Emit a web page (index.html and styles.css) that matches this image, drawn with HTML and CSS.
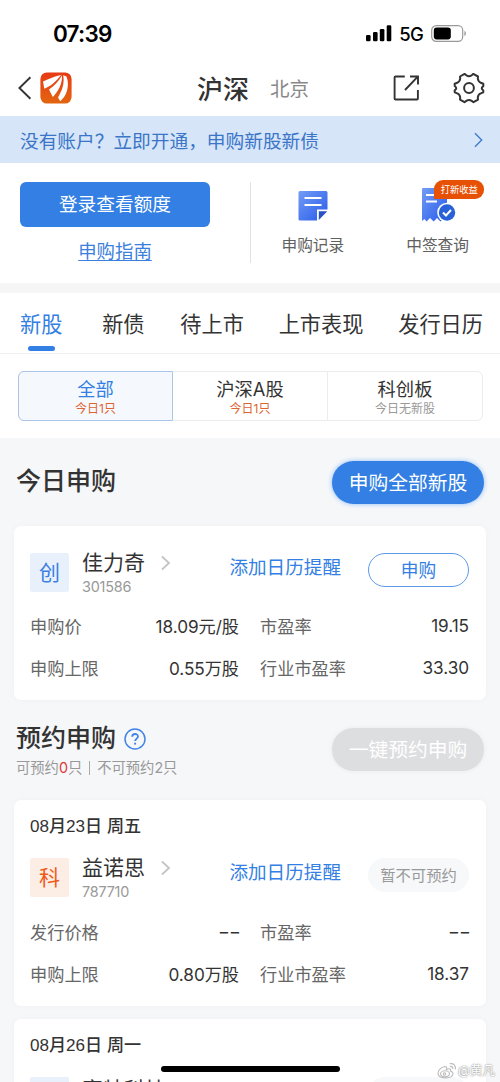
FILE: index.html
```html
<!DOCTYPE html>
<html lang="zh-CN">
<head>
<meta charset="utf-8">
<meta name="viewport" content="width=device-width, initial-scale=1">
<title>新股申购</title>
<link rel="stylesheet" href="styles.css">
</head>
<body>
<div class="screen">
  <div class="status">
    <span class="time">07:39</span>
    <span class="status-right">
      <svg width="26" height="17" viewBox="0 0 26 17"><rect x="0" y="10" width="4.6" height="6.3" rx="1.3"/><rect x="7" y="7" width="4.6" height="9.3" rx="1.3"/><rect x="13.8" y="4" width="4.6" height="12.3" rx="1.3"/><rect x="20.7" y="0.3" width="4.6" height="16" rx="1.3"/></svg>
      <span class="net">5G</span>
      <svg class="battery" width="36" height="17" viewBox="0 0 36 17"><rect x="0.7" y="0.7" width="31" height="15.6" rx="4.6" fill="none" stroke="#999" stroke-width="1.2"/><rect x="2.8" y="2.6" width="17" height="11.8" rx="2.8"/><path d="M33.4 6v5c2-.6 2-4.4 0-5z" fill="#999"/></svg>
    </span>
  </div>

  <header class="nav">
    <svg class="back" width="14" height="24" viewBox="0 0 14 24"><path d="M12.4 1.200 1.400 12l11 10.800" fill="none" stroke="#333" stroke-width="1.900"/></svg>
    <svg class="logo" width="32" height="32" viewBox="0 0 32 32">
      <defs><linearGradient id="lg" x1="0" y1="0" x2="0" y2="1"><stop offset="0" stop-color="#e83a15"/><stop offset="1" stop-color="#e2660f"/></linearGradient></defs>
      <rect x=".4" y=".4" width="31.2" height="31.2" rx="6.5" fill="url(#lg)"/>
      <g fill="#fff">
        <path d="M21 3C14 4.500 8 7.500 3 9.500l1.300 7.300C10 14.500 16.500 9.500 21 3z"/>
        <path d="M22 3.200C18.500 9.500 14 14.200 9 17.500l3.800 7.500C18.500 19 22.500 11.500 22 3.200z"/>
        <path d="M23.200 3.200c1.500 8-1 15-5.200 22.300l2.300 3.800 2-2.200C27.500 22 29.500 12 26.500 4.500z"/>
      </g>
    </svg>
    <div class="nav-tabs"><b>沪深</b><span>北京</span></div>
    <svg class="share" width="28" height="28" viewBox="0 0 28 28" fill="none" stroke="#333" stroke-width="1.9"><path d="M11.800 2.500H2.500a.9.9 0 0 0-.9.900V24.600a.9.900 0 0 0 .9.900H24a.9.900 0 0 0 .9-.9V16M17 2.500h8v8M24.800 2.700 12 16"/></svg>
    <svg class="gear" width="32" height="32" viewBox="0 0 32 32" fill="none" stroke="#333" stroke-width="2" stroke-linejoin="round"><path d="M13.300 3.200Q16 5.200 18.700 3.200L20.300 1.900 25 4.500 24.800 6.500Q25.100 9.800 28.300 11L30.300 11.800V14.200Q27.200 16.300 30.300 18.500V20.300L28.300 21.100Q25 22.300 24.800 25.500L25 27.600 20.500 30.200 18.700 28.900Q16 27.100 13.300 28.900L11.500 30.200 7 27.600 7.200 25.500Q7 22.300 3.700 21.100L1.700 20.300V18.300Q4.800 16.200 1.700 14V11.800L3.700 11Q7 9.800 7.200 6.500L7 4.500 11.600 1.900z"/><circle cx="16" cy="16" r="4.900"/></svg>
  </header>

  <a class="notice"><span>没有账户？立即开通，申购新股新债</span>
    <svg width="9" height="16" viewBox="0 0 9 16"><path d="M1 1.200 7.700 8 1 14.800" fill="none" stroke="#3a79cf" stroke-width="1.300"/></svg>
  </a>

  <section class="quick">
    <div class="login">
      <div class="login-btn">登录查看额度</div>
      <a class="guide">申购指南</a>
    </div>
    <div class="tool">
      <svg width="32" height="32" viewBox="0 0 32 32">
        <defs><linearGradient id="bg" x1="0" y1="0" x2="1" y2="1"><stop offset="0" stop-color="#729cf5"/><stop offset="1" stop-color="#285bea"/></linearGradient></defs>
        <path d="M3 1H29a1.500 1.500 0 0 1 1.500 1.500V19.500H20V30.500H3A1.500 1.500 0 0 1 1.500 29V2.500A1.500 1.500 0 0 1 3 1z" fill="url(#bg)"/>
        <path d="M21.800 21.300h8.500l-8.500 8.700z" fill="#2850c8"/><path d="M7.500 8h17M7.500 15h17" stroke="#fff" stroke-width="2"/>
      </svg>
      <span>申购记录</span>
    </div>
    <div class="tool win">
      <svg width="36" height="36" viewBox="0 0 36 36">
        <path d="M3 1H27V34L24 31l-3.500 3.500L17 31l-3.300 3.500L10 31l-3.500 3.500L4.500 32 2 34V2A1 1 0 0 1 3 1z" fill="url(#bg)"/>
        <path d="M6 8h9M6 14.500h11" stroke="#fff" stroke-width="2"/><circle cx="27" cy="25.500" r="9.800" fill="#fff"/><circle cx="27" cy="25.500" r="8.200" fill="#2861d8"/><path d="m23 25.500 3 3 5-5.500" stroke="#fff" stroke-width="2" fill="none"/>
      </svg>
      <span>中签查询</span>
      <em class="badge">打新收益</em>
    </div>
  </section>

  <nav class="tabs"><span class="on">新股</span><span>新债</span><span>待上市</span><span>上市表现</span><span>发行日历</span></nav>

  <div class="filter">
    <div class="seg">
      <div class="opt on"><b>全部</b><i>今日1只</i></div>
      <div class="opt"><b>沪深A股</b><i>今日1只</i></div>
      <div class="opt none"><b>科创板</b><i>今日无新股</i></div>
    </div>
  </div>

  <main>
    <div class="heading today">
      <h2>今日申购</h2>
      <div class="pill">申购全部新股</div>
    </div>
    <article class="card first">
      <div class="stock">
        <div class="mark">创</div>
        <div class="name"><b>佳力奇</b><small>301586</small></div>
        <svg class="chev" width="10" height="16" viewBox="0 0 10 16"><path d="M1 1.500 8 8 1 14.500" fill="none" stroke="#c4c4c4" stroke-width="1.800"/></svg>
        <a class="remind">添加日历提醒</a>
        <div class="buy">申购</div>
      </div>
      <dl>
        <div><dt>申购价</dt><dd>18.09元/股</dd></div><div><dt>市盈率</dt><dd>19.15</dd></div>
        <div><dt>申购上限</dt><dd>0.55万股</dd></div><div><dt>行业市盈率</dt><dd>33.30</dd></div>
      </dl>
    </article>

    <div class="heading book">
      <div>
        <h2>预约申购<svg width="22" height="22" viewBox="0 0 22 22" fill="none" stroke="#4285e8" stroke-width="1.500"><circle cx="11" cy="11" r="10"/><path d="M8.200 8.800c0-3.700 5.800-3.700 5.800-.3 0 2-2.800 2.200-2.800 4.600" stroke-width="1.800"/><path d="M11.100 14.700v1.900" stroke-width="1.900"/></svg></h2>
        <p>可预约<em>0</em>只<i></i>不可预约2只</p>
      </div>
      <div class="pill off">一键预约申购</div>
    </div>
    <article class="card">
      <h3>08月23日 周五</h3>
      <div class="stock">
        <div class="mark orange">科</div>
        <div class="name"><b>益诺思</b><small>787710</small></div>
        <svg class="chev" width="10" height="16" viewBox="0 0 10 16"><path d="M1 1.500 8 8 1 14.500" fill="none" stroke="#c4c4c4" stroke-width="1.800"/></svg>
        <a class="remind">添加日历提醒</a>
        <div class="buy off">暂不可预约</div>
      </div>
      <dl>
        <div><dt>发行价格</dt><dd class="dash"><span>-</span><span>-</span></dd></div><div><dt>市盈率</dt><dd class="dash"><span>-</span><span>-</span></dd></div>
        <div><dt>申购上限</dt><dd>0.80万股</dd></div><div><dt>行业市盈率</dt><dd>18.37</dd></div>
      </dl>
    </article>
    <article class="card last">
      <h3>08月26日 周一</h3>
      <div class="stock">
        <div class="mark"></div>
        <div class="name"><b>富特科技</b></div>
        <svg class="chev" width="10" height="16" viewBox="0 0 10 16"><path d="M1 1.500 8 8 1 14.500" fill="none" stroke="#c4c4c4" stroke-width="1.800"/></svg>
        <div class="buy off"></div>
      </div>
    </article>
  </main>

  <div class="home-bar"></div>
  <div class="watermark">
    <svg width="20" height="18" viewBox="0 0 20 18" fill="none" stroke="#bbb" stroke-width="1.100"><path d="M8 4.500C4 5 .8 8.500 1 11.500c.5 6 14.500 5.500 15 .2.100-1.700-1.500-2.200-2.500-2.500.8-2-.5-3.200-4-1.700.6-1.600.2-3-1.500-3z" fill="#fff"/><ellipse cx="8" cy="11.800" rx="4.500" ry="3"/><circle cx="7.500" cy="12" r="1.200"/><path d="M13 4.500c2-.4 3.200.8 2.700 2.700M12.600 1.800c4-.8 6.500 1.700 5.700 5.600"/></svg>
    <span>@黄凡</span>
  </div>
</div>
</body>
</html>
```
FILE: styles.css
```css
* { box-sizing: border-box; }
body, h2, h3, p, dl, dd { margin: 0; }
b, i, em, h2, h3, small { font-weight: 400; font-style: normal; }
svg { display: block; flex: none; }
body { font-family: Inter, "Noto Sans CJK SC", sans-serif; color: #333; background: #fff; }
.screen { position: relative; width: 500px; height: 1082px; overflow: hidden; background: #f6f7f9; white-space: nowrap; }

.status { height: 60px; padding: 7px 33px 0 53px; display: flex; align-items: center; justify-content: space-between; background: #fff; color: #000; }
.time { font-size: 22.500px; font-weight: 600; letter-spacing: -.8px; }
.status-right { display: flex; align-items: center; }
.net { font-size: 18.5px; font-weight: 500; margin: 1px 8px 0 7px; letter-spacing: -.8px; }

.nav { height: 56px; padding: 0 15px 0 18px; display: flex; align-items: center; background: #fff; }
.logo { margin-left: 8px; }
.nav-tabs { display: flex; align-items: center; margin-left: 125px; flex: 1; }
.nav-tabs b { font-size: 26px; font-weight: 500; margin-top: -2px; }
.nav-tabs span { font-size: 19.5px; color: #888; margin: -2px 0 0 21px; }
.share { margin-right: 32px; }

.notice { height: 47px; padding: 0 17px 0 20px; display: flex; align-items: center; justify-content: space-between; background: #d6e5f8; color: #3a75c8; font-size: 18.7px; }

.quick { height: 120px; padding: 19px 0 0 20px; display: flex; background: #fff; }
.login { width: 231px; height: 81px; border-right: 1px solid #e2e2e2; }
.login-btn { width: 190px; height: 45px; border-radius: 6px; background: #337fe3; color: #fff; font-size: 18.7px; line-height: 46px; text-align: center; }
.guide { display: block; width: 190px; text-align: center; margin-top: 10px; line-height: 28px; font-size: 18.4px; color: #3b80dc; text-decoration: underline; text-decoration-thickness: 1px; text-underline-offset: 2px; }
.tool { position: relative; width: 125px; padding-top: 8px; display: flex; flex-direction: column; align-items: center; }
.tool span { font-size: 15.7px; line-height: 22px; color: #606060; margin-top: 13px; }
.win { padding-top: 5px; }
.win span { margin-top: 12px; }
.badge { position: absolute; left: 59px; top: -2px; width: 50px; height: 19px; border-radius: 9px 9px 9px 1px; background: #e75106; color: #fff; font-size: 9.3px; line-height: 19px; text-align: center; }

.tabs { height: 71px; padding: 0 17px 0 20px; border-top: 10px solid #f6f6f7; border-bottom: 1px solid #eee; display: flex; justify-content: space-between; background: #fff; font-size: 21.2px; line-height: 62px; }
.tabs span { position: relative; }
.tabs .on { color: #337fe3; margin-right: 5px; }
.tabs span:nth-child(2) { margin-right: 1px; }
.tabs .on::after { content: ""; position: absolute; left: 8px; bottom: 2px; width: 27px; height: 5px; border-radius: 3px; background: #337fe3; }

.filter { height: 84px; padding: 17px 17px 0 18px; background: #fff; }
.seg { height: 50px; display: flex; border: 1px solid #ececef; border-radius: 6px; }
.opt { flex: 1; display: flex; flex-direction: column; align-items: center; border-left: 1px solid #ececef; padding-top: 6px; }
.opt b { font-size: 18.3px; line-height: 23px; }
.opt i { font-size: 12px; line-height: 15px; color: #dc6534; }
.opt.on { flex: 0 0 155px; margin: -1px 0 -1px -1px; border: 1px solid #aac5ea; border-radius: 6px 0 0 6px; background: #f5f9fd; }
.opt.on b { color: #337fe3; }
.opt.on + .opt { border-left: 0; }
.opt.none i { color: #999; }

main { padding: 0 14px; }
.heading { display: flex; align-items: flex-start; justify-content: space-between; padding: 0 2px; }
.today { height: 88px; padding-top: 24px; }
.book { height: 100px; padding-top: 29px; }
h2 { font-size: 25px; font-weight: 500; line-height: 38px; display: flex; align-items: center; }
h2 svg { margin: 2px 0 0 8px; }
.book h2 { margin-top: -10px; }
.book p { font-size: 14.3px; line-height: 22px; color: #999; display: flex; align-items: center; }
.book em { color: #e03838; }
.book i { width: 1px; height: 14px; background: #aaa; margin: 0 7px; }
.pill { width: 152px; height: 43px; border-radius: 22px; background: #337fe3; color: #fff; font-size: 19.8px; line-height: 44px; text-align: center; box-shadow: 0 0 5px #8bbcf7; margin-top: -1px; }
.pill.off { background: #dddee0; box-shadow: 0 0 4px #e7e8ea; line-height: 45px; }

.card { background: #fff; border-radius: 7px; padding: 0 17px 12px 16px; margin-bottom: 13px; box-shadow: 0 0 5px #f0f1f3; }
.card.first { padding: 27px 17px 12px 16px; margin-bottom: 0; }
.first dl { margin-top: 12px; }
h3 { font-family: "Liberation Sans", "Noto Sans CJK SC", sans-serif; font-size: 17.1px; font-weight: 500; line-height: 53px; height: 58px; }
.stock { display: flex; height: 39px; }
.mark { width: 39px; height: 39px; background: #e8f1fb; border-radius: 2px; color: #3c7ee4; font-size: 21px; line-height: 39px; text-align: center; }
.orange { background: #fcede5; color: #ee5a18; }
.name { width: 79px; margin: -3px 0 0 13px; }
.name b { display: block; font-size: 21px; line-height: 26px; }
.name small { display: block; font-size: 14.400px; line-height: 21px; color: #999; letter-spacing: -.2px; }
.last h3, .last .name { margin-top: 0; }
.chev { margin-top: 2px; }
.remind { margin-left: auto; margin-right: 27px; line-height: 28px; font-size: 18.600px; color: #337fe3; }
.buy { width: 101px; height: 34px; border: 1.500px solid #5e9aea; border-radius: 17px; line-height: 33px; font-size: 17.700px; color: #337fe3; text-align: center; }
.buy.off { border-color: #f7f8f9; background: #f7f8f9; color: #999; font-size: 15.300px; }
.stock .chev + .buy { margin-left: auto; }
.last .chev { margin: 4px 0 0 13px; }
dl { display: grid; grid-template-columns: 209px 209px; column-gap: 21px; margin-top: 13px; }
dl > div { height: 42px; display: flex; align-items: center; justify-content: space-between; }
dt { font-size: 17.200px; color: #666; }
dd { font-size: 17.200px; letter-spacing: -.05px; }
.dash { display: flex; gap: 3px; }
.dash span { transform: scaleX(1.5); }

.home-bar { position: absolute; left: 161px; bottom: 10px; width: 179px; height: 6px; border-radius: 3px; background: #000; }
.watermark { position: absolute; left: 437px; bottom: 1px; display: flex; align-items: center; gap: 1px; font-size: 12.500px; line-height: 20px; color: #fff; text-shadow: 0 0 2px #888, 0 0 1px #aaa; }
```
